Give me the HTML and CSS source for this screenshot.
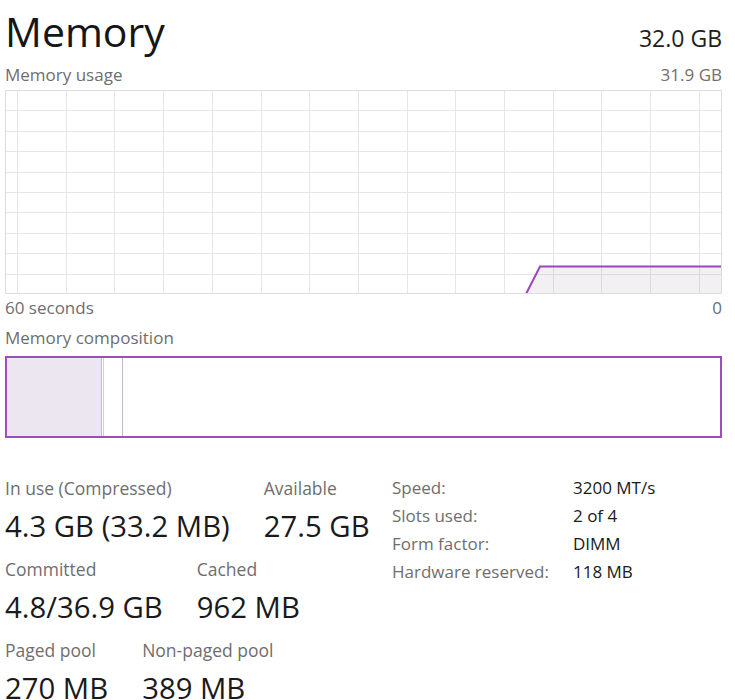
FILE: index.html
```html
<!DOCTYPE html>
<html lang="en">
<head>
    <meta charset="UTF-8">
    <title>Memory - Task Manager</title>
    <link rel="stylesheet" href="styles.css">
</head>
<body>
    <div class="memory-panel">
        <!-- Header -->
        <div class="panel-head">
            <h1>Memory</h1>
            <span class="total">32.0 GB</span>
        </div>

        <!-- Usage graph -->
        <div class="caption-row">
            <span>Memory usage</span>
            <span>31.9 GB</span>
        </div>
        <div class="graph">
            <svg width="717" height="204" viewBox="0 0 717 204" shape-rendering="crispEdges">
                <g stroke="#e6e6e6" stroke-width="1">
                    <line x1="12.5" y1="0" x2="12.5" y2="204"/>
                    <line x1="61.2" y1="0" x2="61.2" y2="204"/>
                    <line x1="109.9" y1="0" x2="109.9" y2="204"/>
                    <line x1="158.6" y1="0" x2="158.6" y2="204"/>
                    <line x1="207.3" y1="0" x2="207.3" y2="204"/>
                    <line x1="256" y1="0" x2="256" y2="204"/>
                    <line x1="304.7" y1="0" x2="304.7" y2="204"/>
                    <line x1="353.4" y1="0" x2="353.4" y2="204"/>
                    <line x1="402.1" y1="0" x2="402.1" y2="204"/>
                    <line x1="450.8" y1="0" x2="450.8" y2="204"/>
                    <line x1="499.5" y1="0" x2="499.5" y2="204"/>
                    <line x1="548.2" y1="0" x2="548.2" y2="204"/>
                    <line x1="596.9" y1="0" x2="596.9" y2="204"/>
                    <line x1="645.6" y1="0" x2="645.6" y2="204"/>
                    <line x1="694.3" y1="0" x2="694.3" y2="204"/>
                    <line x1="0" y1="20.9" x2="717" y2="20.9"/>
                    <line x1="0" y1="41.3" x2="717" y2="41.3"/>
                    <line x1="0" y1="61.7" x2="717" y2="61.7"/>
                    <line x1="0" y1="82.1" x2="717" y2="82.1"/>
                    <line x1="0" y1="102.5" x2="717" y2="102.5"/>
                    <line x1="0" y1="122.9" x2="717" y2="122.9"/>
                    <line x1="0" y1="143.3" x2="717" y2="143.3"/>
                    <line x1="0" y1="163.7" x2="717" y2="163.7"/>
                    <line x1="0" y1="184.1" x2="717" y2="184.1"/>
                </g>
                <polygon points="521,204 535,176.5 717,176.5 717,204" fill="rgba(110,90,120,0.09)" stroke="none"/>
                <polyline points="521,204 535,176.5 717,176.5" fill="none" stroke="#9b45c0" stroke-width="2" shape-rendering="auto"/>
                <rect x="0.5" y="0.5" width="716" height="203" fill="none" stroke="#dcdcdc"/>
            </svg>
        </div>
        <div class="caption-row axis">
            <span>60 seconds</span>
            <span>0</span>
        </div>

        <!-- Composition bar -->
        <div class="caption-row composition-title">
            <span>Memory composition</span>
        </div>
        <div class="composition">
            <div class="seg in-use"></div>
            <div class="seg modified"></div>
            <div class="seg standby"></div>
        </div>

        <!-- Stats -->
        <div class="stats">
            <div class="stats-left">
                <div class="stat-row">
                    <div class="stat">
                        <div class="stat-label">In use (Compressed)</div>
                        <div class="stat-value">4.3 GB (33.2 MB)</div>
                    </div>
                    <div class="stat">
                        <div class="stat-label">Available</div>
                        <div class="stat-value">27.5 GB</div>
                    </div>
                </div>
                <div class="stat-row">
                    <div class="stat">
                        <div class="stat-label">Committed</div>
                        <div class="stat-value">4.8/36.9 GB</div>
                    </div>
                    <div class="stat">
                        <div class="stat-label">Cached</div>
                        <div class="stat-value">962 MB</div>
                    </div>
                </div>
                <div class="stat-row">
                    <div class="stat">
                        <div class="stat-label">Paged pool</div>
                        <div class="stat-value">270 MB</div>
                    </div>
                    <div class="stat">
                        <div class="stat-label">Non-paged pool</div>
                        <div class="stat-value">389 MB</div>
                    </div>
                </div>
            </div>
            <div class="specs">
                <span class="spec-label">Speed:</span><span class="spec-value">3200 MT/s</span>
                <span class="spec-label">Slots used:</span><span class="spec-value">2 of 4</span>
                <span class="spec-label">Form factor:</span><span class="spec-value">DIMM</span>
                <span class="spec-label">Hardware reserved:</span><span class="spec-value">118 MB</span>
            </div>
        </div>
    </div>
</body>
</html>
```

FILE: styles.css
```css
/* General Styles */
body {
    margin: 0;
    padding: 0;
    background: #fff;
    font-family: "Open Sans", "Noto Sans", sans-serif;
    color: #1a1a1a;
    overflow: hidden;
}

.memory-panel {
    width: 717px;
    padding-left: 5px;
}

/* Header */
.panel-head {
    display: flex;
    justify-content: space-between;
    align-items: baseline;
    padding-top: 5px;
    height: 52px;
}

.panel-head h1 {
    margin: 0;
    font-size: 41px;
    font-weight: 400;
    line-height: 52px;
    color: #161616;
}

.total {
    font-size: 23px;
    color: #1e1e1e;
}

/* Captions */
.caption-row {
    display: flex;
    justify-content: space-between;
    margin-top: 8px;
    font-size: 17px;
    line-height: 20px;
    color: #6e6e6e;
}

.caption-row.axis {
    margin-top: 4px;
}

.caption-row.composition-title {
    margin-top: 10px;
}

/* Graph */
.graph {
    margin-top: 5px;
    height: 204px;
}

.graph svg {
    display: block;
}

/* Composition */
.composition {
    display: flex;
    margin-top: 8px;
    height: 78px;
    border: 2px solid #9b4dbb;
}

.seg {
    height: 100%;
}

.seg.in-use {
    width: 94px;
    background: #ece6f0;
    border-right: 1px solid #cbb5d6;
}

.seg.modified {
    width: 1px;
    border-right: 1px solid #d9c9e0;
}

.seg.standby {
    width: 18px;
    border-right: 1px solid #c9b3d4;
}

/* Stats */
.stats {
    display: flex;
    margin-top: 36px;
}

.stats-left {
    width: 387px;
    padding-top: 3px;
}

.stat-row {
    display: flex;
    gap: 34px;
    margin-bottom: 12px;
}

.stat-label {
    font-size: 17.5px;
    line-height: 22px;
    color: #6e6e6e;
}

.stat-value {
    margin-top: 7px;
    font-size: 29.3px;
    line-height: 40px;
    color: #1a1a1a;
}

.specs {
    display: grid;
    grid-template-columns: 181px auto;
    grid-auto-rows: 28px;
    align-self: flex-start;
    font-size: 17px;
    line-height: 28px;
}

.spec-label {
    color: #6e6e6e;
}

.spec-value {
    color: #1a1a1a;
}
```
